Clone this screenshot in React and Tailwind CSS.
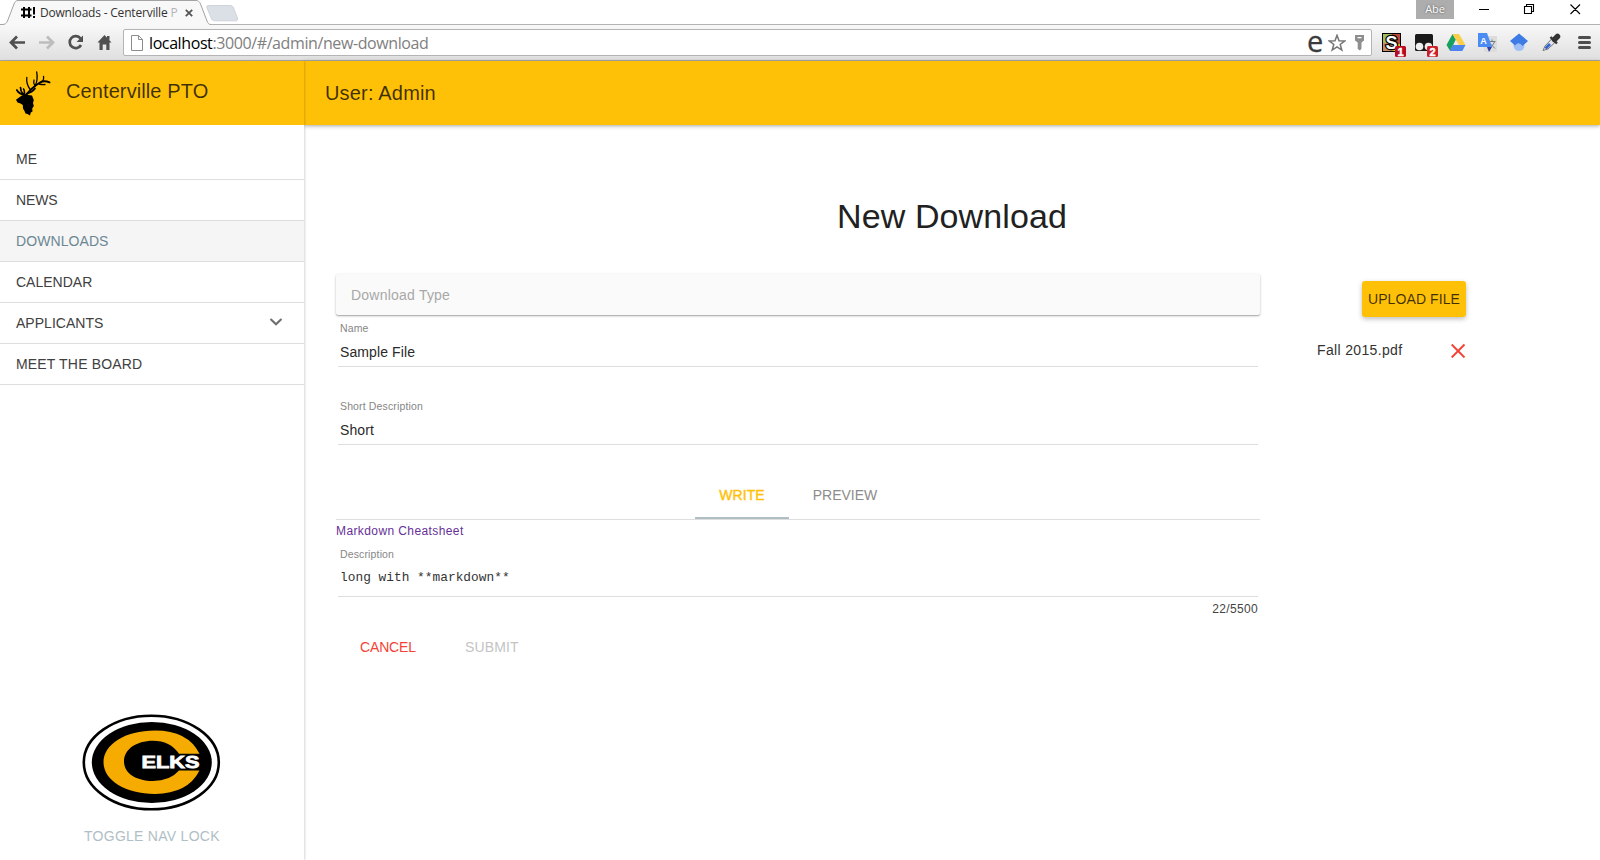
import React from "react";

const navItems = [
  { label: "ME", track: "tracking-[0.1px]" },
  { label: "NEWS", track: "tracking-[-0.1px]" },
  { label: "DOWNLOADS", track: "tracking-[0.08px]", active: true },
  { label: "CALENDAR", track: "tracking-[0px]" },
  { label: "APPLICANTS", track: "tracking-[0.03px]", expandable: true },
  { label: "MEET THE BOARD", track: "tracking-[0.17px]" },
];

function TabStrip() {
  return (
    <div className="flex h-6 shrink-0 bg-white">
      <div className="relative h-[25px] w-[245px]">
        <svg className="absolute left-0 top-0" width="245" height="25" viewBox="0 0 245 25" fill="none">
          <path d="M0 24.5H2C5 24.5 6.500 23.500 7.500 21L14 4C15 1.500 16 .5 18 .5H196C198 .5 199.500 1.500 200.500 4L207 21C208 23.500 209 24.500 211 24.500V25H0Z" fill="#f8f8f8" />
          <path d="M0 24.500H2C5 24.500 6.500 23.500 7.500 21L14 4C15 1.500 16 .5 18 .5H196C198 .5 199.500 1.500 200.500 4L207 21C208 23.500 209 24.500 211 24.500" stroke="#a3a3a3" />
          <path d="M208.500 5.500H230C232 5.500 233 6.300 233.600 8L237.400 18C238 20 237.400 20.800 235.700 20.800H215C213 20.800 212 20 211.300 18.200L207 8C206.400 6.300 207 5.500 208.500 5.500Z" fill="#dbdfe6" stroke="#cfd3da" />
        </svg>
        <div className="relative flex h-[25px] items-center pl-[21px]">
          <svg width="14" height="14" viewBox="0 0 14 14" fill="none" stroke="#000" strokeWidth="2">
            <path d="M3 1V12M8 1V12M0 3.500H10.500M0 9.500H10.500M13 1V8.500M13 10V12" />
          </svg>
          <div className="ml-[5px] w-[138px] overflow-hidden whitespace-nowrap font-['Open_Sans',sans-serif] text-[12px] leading-5 tracking-[-0.2px] text-[#333]">
            Downloads - Centerville <span className="text-[#b5b5b5]">P</span>
          </div>
          <svg className="ml-[7px]" width="8" height="8" viewBox="0 0 8 8" stroke="#555" strokeWidth="1.800">
            <path d="M.8 .8L7.200 7.200M7.200 .8L.8 7.200" />
          </svg>
        </div>
      </div>
      <div className="flex-1" />
      <div className="mr-[24px] h-[19px] w-[38px] bg-[#adadad] text-center font-['Open_Sans',sans-serif] text-[11px] leading-[18px] tracking-[-0.2px] text-white [text-shadow:0_0_2px_#444]">
        Abe
      </div>
      <svg className="mr-[10px]" width="112" height="19" viewBox="0 0 112 19" fill="none" stroke="#000" strokeWidth="1.100">
        <path d="M1 9.500H11M46.500 6.500H53.500V13.500H46.500ZM48.500 6.500V4.500H55.500V11.500H53.500M92.500 4.500L102 14M102 4.500L92.500 14" />
      </svg>
    </div>
  );
}

function Toolbar() {
  return (
    <div className="flex h-[37px] shrink-0 items-center border-b border-t border-b-[#a9a9a9] border-t-[#b3b3b3] bg-linear-to-b from-[#f8f8f8] to-[#dfdfdf]">
      <svg className="ml-[8px] shrink-0" width="106" height="20" viewBox="8 33 106 20" fill="none">
        <path d="M25 42.500H12M17 36.500L11 42.500L17 48.500" stroke="#505050" strokeWidth="2.700" />
        <path d="M39 42.500H52M47 36.500L53 42.500L47 48.500" stroke="#bdbdbd" strokeWidth="2.700" />
        <path d="M80.500 38.500A6 6 0 1 0 81 45" stroke="#505050" strokeWidth="2.700" />
        <path d="M83 35.500V42H76.500Z" fill="#505050" />
        <path d="M104.500 35L111.500 42.500H109.500V50H106.300V44.500H102.700V50H99.500V42.500H97.500ZM107 36H109.500V40L107 38Z" fill="#505050" />
      </svg>
      <div className="ml-[9px] flex h-[27px] flex-1 items-center rounded-[2px] border border-[#b4b4b4] bg-white">
        <svg className="ml-[7px]" width="12" height="16" viewBox="0 0 12 16" fill="#fff" stroke="#8c8c8c">
          <path d="M.5 .5H7.500L11.500 4.500V15.500H.5ZM7.500 .5V4.500H11.500" />
        </svg>
        <div className="flex-1 pl-[6px] font-['Open_Sans',sans-serif] text-[16px] leading-6 tracking-[-0.4px] text-[#808080]">
          <span className="text-black">localhost</span>:3000/#/admin/new-download
        </div>
        <div className="h-[25px] w-[18px] font-['Open_Sans',sans-serif] text-[29px] leading-[22px] text-[#3b3b3b] [-webkit-text-stroke:0.3px_#3b3b3b]">e</div>
        <svg className="ml-[3px]" width="18" height="18" viewBox="0 0 18 18" fill="#fff" stroke="#767676" strokeWidth="1.500">
          <path d="M9 1.300L11 6.700L16.800 6.900L12.200 10.500L13.800 16L9 12.800L4.200 16L5.800 10.500L1.200 6.900L7 6.700Z" />
        </svg>
        <svg className="ml-[8px] mr-[6px]" width="11" height="16" viewBox="0 0 11 16" fill="#8e8e8e">
          <path fillRule="evenodd" d="M1 0H10V5.500L7.500 7.500V13.500L6 15.500L3.700 14V7.500L1 5.500ZM3.500 2H7.500V3.200H3.500Z" />
        </svg>
      </div>
      <svg className="ml-[9px] mr-[9px] shrink-0" width="210" height="34" viewBox="1381 26 210 34">
        <rect x="1382.500" y="33.500" width="18" height="18" fill="#a5bb5c" stroke="#000" />
        <path d="M1392 34H1400V44H1392Z" fill="#bd4738" />
        <path d="M1383 43H1392V51H1383Z" fill="#c98c62" />
        <path d="M1392 44H1400V51H1392Z" fill="#e0c32a" />
        <text x="1391.500" y="49" textAnchor="middle" fontFamily="Liberation Sans" fontWeight="700" fontSize="18" fill="#fff" stroke="#000" strokeWidth="2.500" paintOrder="stroke">S</text>
        <rect x="1395" y="46" width="11" height="11" rx="1.500" fill="#b90c20" />
        <text x="1400.500" y="55.500" textAnchor="middle" fontFamily="Liberation Sans" fontWeight="700" fontSize="11" fill="#fff" stroke="#fff" strokeWidth=".5">1</text>
        <rect x="1415" y="34" width="18" height="17" rx="1.500" fill="#1a1a1a" />
        <circle cx="1419.500" cy="46.500" r="3.800" fill="#eee" />
        <circle cx="1428.500" cy="46.500" r="3.800" fill="#eee" />
        <rect x="1427" y="46" width="11" height="11" rx="1.500" fill="#c9202a" />
        <text x="1432.500" y="55.500" textAnchor="middle" fontFamily="Liberation Sans" fontWeight="700" fontSize="11" fill="#fff" stroke="#fff" strokeWidth=".5">2</text>
        <path d="M1452.500 34L1455.800 39.500L1450.200 51L1446.500 45Z" fill="#18a05e" />
        <path d="M1452.500 34H1459L1465.500 45H1459Z" fill="#fccd48" />
        <path d="M1453 45H1465.500L1462.300 51H1449.800Z" fill="#4a86ee" />
        <rect x="1484" y="36" width="13" height="16" fill="#dcdcdc" />
        <path d="M1488.500 41.500H1495.500M1492 39.500V42M1494.500 42Q1493 46 1489 48.500M1490 43.500L1495 48.500" stroke="#6f7f80" fill="none" />
        <path d="M1478 33H1487L1492 47H1478Z" fill="#4b8bf4" />
        <path d="M1487 47H1492L1489 52Z" fill="#3341a0" />
        <text x="1483.500" y="44" textAnchor="middle" fontFamily="Liberation Sans" fontWeight="700" fontSize="9" fill="#fff">A</text>
        <circle cx="1519" cy="45.500" r="5.500" fill="#9fc0f7" />
        <path d="M1519 33.500L1528 41L1522.500 46Q1519 41 1515 45.500L1510 41Z" fill="#3e7be6" />
        <path d="M1543 50.500L1545 46L1552 38.500L1555.500 42L1548 49Z" fill="#dfe5ef" stroke="#777" />
        <path d="M1545.500 48.500L1550 44" stroke="#3561d0" strokeWidth="2.600" />
        <path d="M1550.500 37L1557 43.500" stroke="#333" strokeWidth="2.400" />
        <path d="M1554.500 39.500L1557.500 36.500" stroke="#333" strokeWidth="5.500" strokeLinecap="round" />
        <path d="M1579.500 37.500H1589.500M1579.500 42.500H1589.500M1579.500 47.500H1589.500" stroke="#4d4d4d" strokeWidth="3" strokeLinecap="round" />
      </svg>
    </div>
  );
}

function ElkIcon() {
  return (
    <svg className="ml-[15px] mt-[9px] shrink-0" width="37" height="46" viewBox="0 0 37 46" fill="none">
      <path d="M1 29.800L4 27.500L6.500 25.800L8 25L6 23.500L10 24.500L13 25L17 25.500L18.800 30L18 33L18.800 36L17.200 38.500L17.500 41.500L15.800 42.500L15 45.500L12.500 44L10.500 43.500L9.500 41L8 38.500L7.800 35L5.500 33.500L2.500 32.500Z" fill="#000" />
      <path d="M10.500 25.500Q13 23 16 19.500Q20 15.500 25 12.500Q29 10 34.500 12.300" stroke="#000" strokeWidth="2" strokeLinecap="round" />
      <path d="M9 24.500Q4 24 1.800 20M8 23.800Q5.500 21.500 5.500 17.500M9.500 24.500Q9.500 20 8.500 19M12 23.500Q17 22.500 20 18.500" stroke="#000" strokeWidth="1.700" strokeLinecap="round" />
      <path d="M15.500 20Q11 14 11.800 7.500M20.500 15.500Q23 9 21.700 2M25.500 12.500Q29.500 10.500 28.500 6.500M20 16Q18 13 19 10M24 14Q28 15 30 14.500" stroke="#000" strokeWidth="1.300" strokeLinecap="round" />
    </svg>
  );
}

function ElksLogo() {
  return (
    <svg className="ml-[82px]" width="139" height="98" viewBox="82 712.500 139 98">
      <ellipse cx="151.300" cy="762" rx="67.500" ry="46.800" fill="#fff" stroke="#000" strokeWidth="2.600" />
      <ellipse cx="151.800" cy="762" rx="60" ry="40.500" fill="#000" />
      <path d="M199.500 753.300Q188 730 155 730C125 730 103.500 744 103.500 761.800C103.500 780 126 793.500 155 793.500Q188 793 199.500 770H179Q170 780.500 153 780.500C136 780.500 124 772.500 124 761C124 749 136 740.300 153 740.300Q170 740.300 179 753.300Z" fill="#f5ab00" />
      <path d="M172 753.800H200V769.500H172Z" fill="#000" />
      <text x="141.500" y="767.500" textLength="58" lengthAdjust="spacingAndGlyphs" fontFamily="Liberation Sans" fontWeight="700" fontSize="17" fill="#fff" stroke="#fff" strokeWidth=".8">ELKS</text>
    </svg>
  );
}

function Sidebar() {
  return (
    <aside className="relative z-10 flex w-[304px] shrink-0 flex-col bg-white shadow-[1px_0_2px_rgba(0,0,0,0.16)]">
      <div className="flex h-16 shrink-0 bg-[#ffc107]">
        <ElkIcon />
        <div className="ml-[14px] h-[60px] text-[20px] leading-[60px] tracking-[0.1px] text-black/75">Centerville PTO</div>
      </div>
      <nav className="pt-[14px]">
        {navItems.map((item) => (
          <div
            key={item.label}
            className={`flex h-[41px] items-center justify-between border-b border-[#dedede] pl-4 pr-[21px] text-[14px] leading-10 ${item.track} ${
              item.active ? "bg-[#f5f5f5] text-[#6c8794]" : "text-[#404040]"
            }`}
          >
            {item.label}
            {item.expandable && (
              <svg className="-mt-[2px]" width="14" height="8" viewBox="0 0 14 8" fill="none" stroke="#707070" strokeWidth="2.200">
                <path d="M1.500 1L7 6.200L12.500 1" />
              </svg>
            )}
          </div>
        ))}
      </nav>
      <div className="flex-1" />
      <ElksLogo />
      <div className="mb-[6px] mt-[7px] pl-[84px] text-[14px] leading-9 tracking-[0.27px] text-[#b0bec5]">TOGGLE NAV LOCK</div>
    </aside>
  );
}

function Field({ label, value, last }) {
  return (
    <div className={last ? "h-[46px] px-[2px]" : "h-[78px] px-[2px]"}>
      <div className="pl-[2px] text-[10.5px] leading-[14px] tracking-[0.14px] text-[#868686]">{label}</div>
      <div className="mt-[7px] border-b border-[#dedede] pb-1 pl-[2px] text-[14px] leading-5 tracking-[0.1px] text-[#2a2a2a]">{value}</div>
    </div>
  );
}

function DownloadForm() {
  return (
    <div className="w-[924px]">
      <div className="h-[41px] rounded-[2px] bg-[#fafafa] pl-[15px] pt-px text-[14px] leading-10 tracking-[0.22px] text-[#a8a8a8] shadow-[0_1px_3px_rgba(0,0,0,0.2),0_1px_1px_rgba(0,0,0,0.2)]">
        Download Type
      </div>
      <div className="pt-[6px]">
        <Field label="Name" value="Sample File" />
        <Field label="Short Description" value="Short" last />
      </div>
      <div className="mt-[26px] flex h-[49px] justify-center border-b border-[#dedede] text-center text-[14px] leading-[48px]">
        <div className="h-[48px] w-[94px] border-b-2 border-[#b0bec5] tracking-[0.1px] text-[#ffc107] [-webkit-text-stroke:0.4px_#ffc107]">WRITE</div>
        <div className="w-[112px] text-[#8c8c8c]">PREVIEW</div>
      </div>
      <div className="mt-[3px] text-[12px] leading-4 tracking-[0.4px] text-[#673097]">Markdown Cheatsheet</div>
      <div className="mt-[8px] px-[2px]">
        <div className="pl-[2px] text-[10.5px] leading-[14px] tracking-[0.14px] text-[#868686]">Description</div>
        <div className="mt-[7px] border-b border-[#dedede] pb-[8px] pl-[2px] font-['Liberation_Mono',monospace] text-[12.8px] leading-5 tracking-[0.03px] text-[#333]">
          long with **markdown**
        </div>
        <div className="mt-1 text-right text-[12px] leading-4 tracking-[0.35px] text-[#444]">22/5500</div>
      </div>
      <div className="mt-[12px] flex text-[14px] leading-9">
        <div className="w-[129px] pl-6 tracking-[-0.15px] text-[#f44336]">CANCEL</div>
        <div className="tracking-[0.15px] text-[#c4c4c4]">SUBMIT</div>
      </div>
    </div>
  );
}

function UploadPanel() {
  return (
    <div className="ml-[57px] mt-[7px] w-[149px]">
      <div className="ml-auto h-9 w-[104px] rounded-[3px] bg-[#ffc107] text-center text-[14px] leading-9 tracking-[0.1px] text-black/75 shadow-[0_2px_5px_rgba(0,0,0,0.26)]">
        UPLOAD FILE
      </div>
      <div className="mt-[23px] flex h-[22px] justify-between">
        <div className="text-[14px] leading-5 tracking-[0.35px] text-[#333]">Fall 2015.pdf</div>
        <svg className="mt-[3px]" width="15" height="15" viewBox="0.5 -0.5 15 15" stroke="#f44336" strokeWidth="1.900">
          <path d="M1.200 1L14 14M14 1L1.200 14" />
        </svg>
      </div>
    </div>
  );
}

export default function App() {
  return (
    <div className="flex h-[860px] w-[1600px] flex-col overflow-hidden bg-white font-['Liberation_Sans',sans-serif]">
      <TabStrip />
      <Toolbar />
      <div className="flex min-h-0 flex-1">
        <Sidebar />
        <main className="flex min-w-0 flex-1 flex-col">
          <header className="h-16 shrink-0 bg-[#ffc107] pl-[21px] text-[20px] leading-[64px] tracking-[0.18px] text-black/75 shadow-[0_1px_4px_rgba(0,0,0,0.35)]">
            User: Admin
          </header>
          <h1 className="mt-[71px] text-center text-[34px] leading-10 tracking-[0.1px] text-[#212121]">New Download</h1>
          <div className="mt-[38px] flex items-start pl-8">
            <DownloadForm />
            <UploadPanel />
          </div>
        </main>
      </div>
    </div>
  );
}
